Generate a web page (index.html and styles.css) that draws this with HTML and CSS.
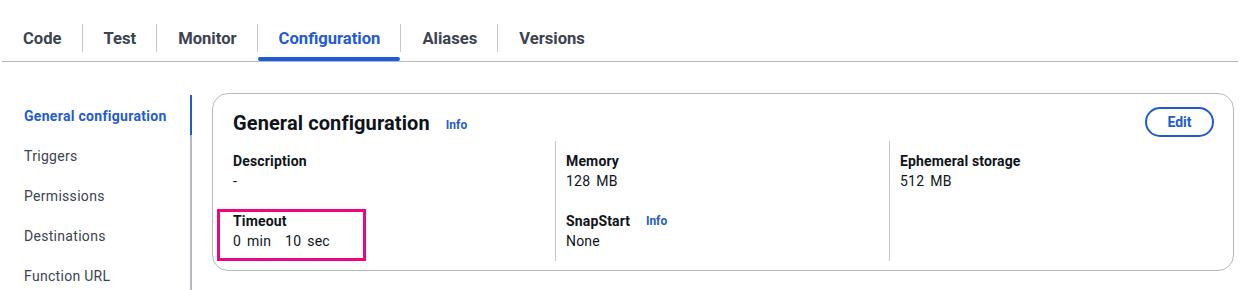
FILE: index.html
```html
<!DOCTYPE html>
<html lang="en">
<head>
<meta charset="utf-8">
<title>Configuration</title>
<link rel="stylesheet" href="styles.css">
</head>
<body>
<div class="page">
  <nav class="tabs">
    <div class="tab">Code</div>
    <div class="tab">Test</div>
    <div class="tab">Monitor</div>
    <div class="tab active">Configuration</div>
    <div class="tab">Aliases</div>
    <div class="tab">Versions</div>
  </nav>
  <div class="main">
    <aside class="side">
      <div class="side-item active">General configuration</div>
      <div class="side-item">Triggers</div>
      <div class="side-item">Permissions</div>
      <div class="side-item">Destinations</div>
      <div class="side-item">Function URL</div>
    </aside>
    <section class="card">
      <header class="card-head">
        <h2 class="title">General configuration <span class="info">Info</span></h2>
        <button class="edit">Edit</button>
      </header>
      <div class="grid">
        <div class="col">
          <div class="pair">
            <div class="label">Description</div>
            <div class="value">-</div>
          </div>
          <div class="pair highlight">
            <div class="label">Timeout</div>
            <div class="value"><span class="num">0</span><span class="unit">min</span><span class="num">10</span><span class="unit">sec</span></div>
          </div>
        </div>
        <div class="col">
          <div class="pair">
            <div class="label">Memory</div>
            <div class="value"><span class="num">128</span><span class="unit">MB</span></div>
          </div>
          <div class="pair">
            <div class="label">SnapStart <span class="info">Info</span></div>
            <div class="value">None</div>
          </div>
        </div>
        <div class="col">
          <div class="pair">
            <div class="label">Ephemeral storage</div>
            <div class="value"><span class="num">512</span><span class="unit">MB</span></div>
          </div>
        </div>
      </div>
    </section>
  </div>
</div>
</body>
</html>
```

FILE: styles.css
```css
*, *::before, *::after { box-sizing: border-box; }
html, body { margin: 0; padding: 0; background: #ffffff; }
body {
  font-family: Roboto, "Liberation Sans", sans-serif;
  color: #0f141a;
  font-size: 14px;
  line-height: 20px;
}
.page {
  width: 1236px;
  margin-left: 2px;
  padding-top: 20px;
}
.tabs {
  display: flex;
  border-bottom: 1px solid #b4b9c0;
  height: 42px;
}
.tab {
  position: relative;
  margin-top: 4px;
  height: 28px;
  padding: 5px 20px 0 21px;
  font-size: 16.6px;
  font-weight: 700;
  color: #3c4350;
  line-height: 20px;
}
.tab + .tab { border-left: 1px solid #c6c6cd; }
.tab.active { color: #1f5bd6; }
.tab.active::after {
  content: "";
  position: absolute;
  left: 0;
  right: 0;
  top: 33px;
  height: 4px;
  border-radius: 2px;
  background: #1f5bd6;
}
.main {
  display: flex;
  align-items: flex-start;
  margin-top: 31px;
}
.side {
  width: 190px;
  border-right: 2px solid #b4b9c0;
  margin-top: 2px;
  height: 200px;
  flex-shrink: 0;
}
.side-item {
  padding: 11px 0 9px 22px;
  color: #3c4350;
  font-size: 14px;
  line-height: 20px;
  letter-spacing: 0.3px;
}
.side-item.active {
  color: #1f5bd6;
  font-weight: 700;
  margin-right: -2px;
  border-right: 2px solid #1f5bd6;
}
.card {
  margin-left: 20px;
  width: 1022px;
  border: 1px solid #b4b9c0;
  border-radius: 16px;
  padding: 12px 19px 9px 9px;
}
.card-head {
  display: flex;
  justify-content: space-between;
  align-items: center;
  padding-left: 11px;
  height: 31px;
}
.title {
  margin: 0;
  font-size: 20px;
  font-weight: 700;
  line-height: 24px;
  color: #0f141a;
  padding-top: 4px;
  letter-spacing: 0.1px;
}
.info {
  font-size: 12px;
  font-weight: 700;
  color: #1f5bd6;
  margin-left: 10px;
  vertical-align: 1px;
  letter-spacing: 0;
}
.title .info { margin-left: 11px; }
.edit {
  width: 69px;
  height: 30px;
  border: 2px solid #1f5bd6;
  border-radius: 16px;
  background: #fff;
  color: #1f5bd6;
  font-family: inherit;
  font-size: 14px;
  font-weight: 700;
  padding: 0;
}
.grid {
  display: grid;
  grid-template-columns: 1fr 1fr 1fr;
  margin-top: 4px;
  margin-left: -1px;
  margin-right: -9px;
}
.col {
  padding: 10px 10px 10px 12px;
  display: flex;
  flex-direction: column;
  gap: 20px;
}
.col + .col { border-left: 1px solid #c6c6cd; padding-left: 10px; }
.label { font-weight: 700; letter-spacing: 0.15px; }
.label .info { margin-left: 12px; }
.value { color: #0f141a; letter-spacing: 0.2px; }
.num { margin-right: 6px; }
.unit { margin-right: 14px; }
.pair { position: relative; }
.highlight::after {
  content: "";
  position: absolute;
  left: -16px;
  top: -2px;
  width: 149px;
  height: 52px;
  border: 3px solid #f0047f;
}
```
